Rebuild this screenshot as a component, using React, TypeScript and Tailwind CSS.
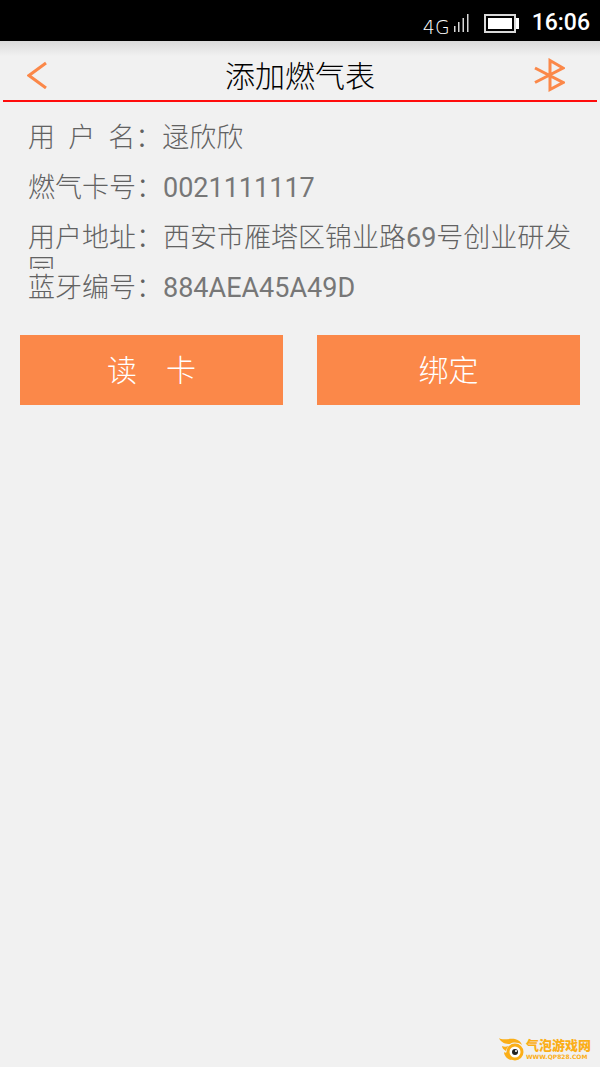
import React from "react";

interface Field {
  label: string;
  text: React.ReactNode;
}

const fields: Field[] = [
  { label: "用  户  名：", text: "逯欣欣" },
  { label: "燃气卡号：", text: <Latin>0021111117</Latin> },
  {
    label: "用户地址：",
    text: (
      <>
        西安市雁塔区锦业路<Latin>69</Latin>号创业研发园
      </>
    ),
  },
  { label: "蓝牙编号：", text: <Latin>884AEA45A49D</Latin> },
];

function Latin({ children }: { children: React.ReactNode }) {
  return <span className="font-normal text-[#777]">{children}</span>;
}

function StatusBar() {
  return (
    <div className="flex h-[41px] items-center justify-end bg-black pr-[10px] text-white">
      <span className="mt-3 font-['DejaVu_Sans',sans-serif] text-[19px] font-extralight leading-5 text-white">
        4G
      </span>
      <svg className="ml-1 mt-1 h-5 w-4" viewBox="0 0 16 20" fill="#d8d8d8">
        <rect x="0" y="13" width="1.500" height="6" />
        <rect x="4" y="9" width="1.500" height="10" />
        <rect x="8.500" y="5" width="1.500" height="14" />
        <rect x="13" y="1" width="1.500" height="18" />
      </svg>
      <svg className="ml-[14px] mt-[6px] h-[19px] w-9" viewBox="0 0 36 19">
        <rect x="1" y="1" width="30" height="17" fill="none" stroke="#d8d8d8" strokeWidth="2" />
        <rect x="4" y="4" width="24" height="11" fill="#fff" />
        <rect x="32" y="4" width="3" height="11" fill="#fff" />
      </svg>
      <span className="ml-3 mt-1 text-[23px] font-medium leading-7">16:06</span>
    </div>
  );
}

function Header() {
  return (
    <header className="bg-linear-to-b from-[#dadada] to-[#f1f1f1] to-25% px-[3px]">
      <div className="flex h-[61px] items-center border-b-2 border-[#ff0c0c] px-6 pt-2">
        <button aria-label="返回" className="w-10">
          <svg className="h-7 w-5" viewBox="0 0 20 28" fill="none" stroke="#fb8849" strokeWidth="3">
            <path d="M19 2 2 14.500 19 27" />
          </svg>
        </button>
        <h1 className="flex-1 pt-1 text-center text-[30px] font-light leading-10 text-black">
          添加燃气表
        </h1>
        <button aria-label="蓝牙" className="w-10">
          <svg className="h-[34px] w-8" viewBox="0 0 32 34" fill="none" stroke="#fb8849" strokeWidth="3">
            <path d="M2 10 30 24.500 17 31.500V2.500L30 10 2 24.500" />
          </svg>
        </button>
      </div>
    </header>
  );
}

function Watermark() {
  return (
    <footer className="mt-auto flex items-center justify-end gap-[2px] pb-[6px] pr-[9px] text-[#fbae17]">
      <svg className="h-6 w-[26px]" viewBox="0 0 26 24">
        <path
          fill="#fbae17"
          d="M1 1c4 3 10 0 16 1 4 1 6 3 7 6-4-3-9-3-12-1C8 7 3 6 1 1ZM4 9c2 1 4 1 7 0-2 2-3 3-3 5-2-1-4-3-4-5ZM6 15c1 1 2 1 3 0 1 3 2 5 5 8-4 0-8-4-8-8Z"
        />
        <circle cx="17" cy="15" r="7" fill="#fff" stroke="#fbae17" strokeWidth="3" />
        <circle cx="17" cy="15" r="3" fill="#222" />
        <circle cx="18" cy="14" r="1" fill="#fff" />
      </svg>
      <div className="flex flex-col">
        <span className="text-[13px] font-black leading-4">气泡游戏网</span>
        <span className="font-['DejaVu_Sans',sans-serif] text-[6px] font-bold leading-[6px]">
          WWW.QP828.COM
        </span>
      </div>
    </footer>
  );
}

export default function App() {
  return (
    <div className="flex min-h-screen flex-col bg-[#f1f1f1] font-['Roboto','Noto_Sans_CJK_SC',sans-serif]">
      <StatusBar />
      <Header />
      <main>
        <dl className="px-7 pt-5 text-[27px] font-light leading-8 text-[#626262]">
          {fields.map((field) => (
            <div key={field.label} className="mb-[3px] h-[47px] overflow-hidden">
              <dt className="inline whitespace-pre">{field.label}</dt>
              <dd className="inline">{field.text}</dd>
            </div>
          ))}
        </dl>
        <div className="mt-4 grid grid-cols-2 gap-[34px] px-5">
          <button className="h-[70px] whitespace-pre bg-[#fb8849] text-[30px] font-light text-white">
            {"读    卡"}
          </button>
          <button className="h-[70px] bg-[#fb8849] text-[30px] font-light text-white">绑定</button>
        </div>
      </main>
      <Watermark />
    </div>
  );
}
